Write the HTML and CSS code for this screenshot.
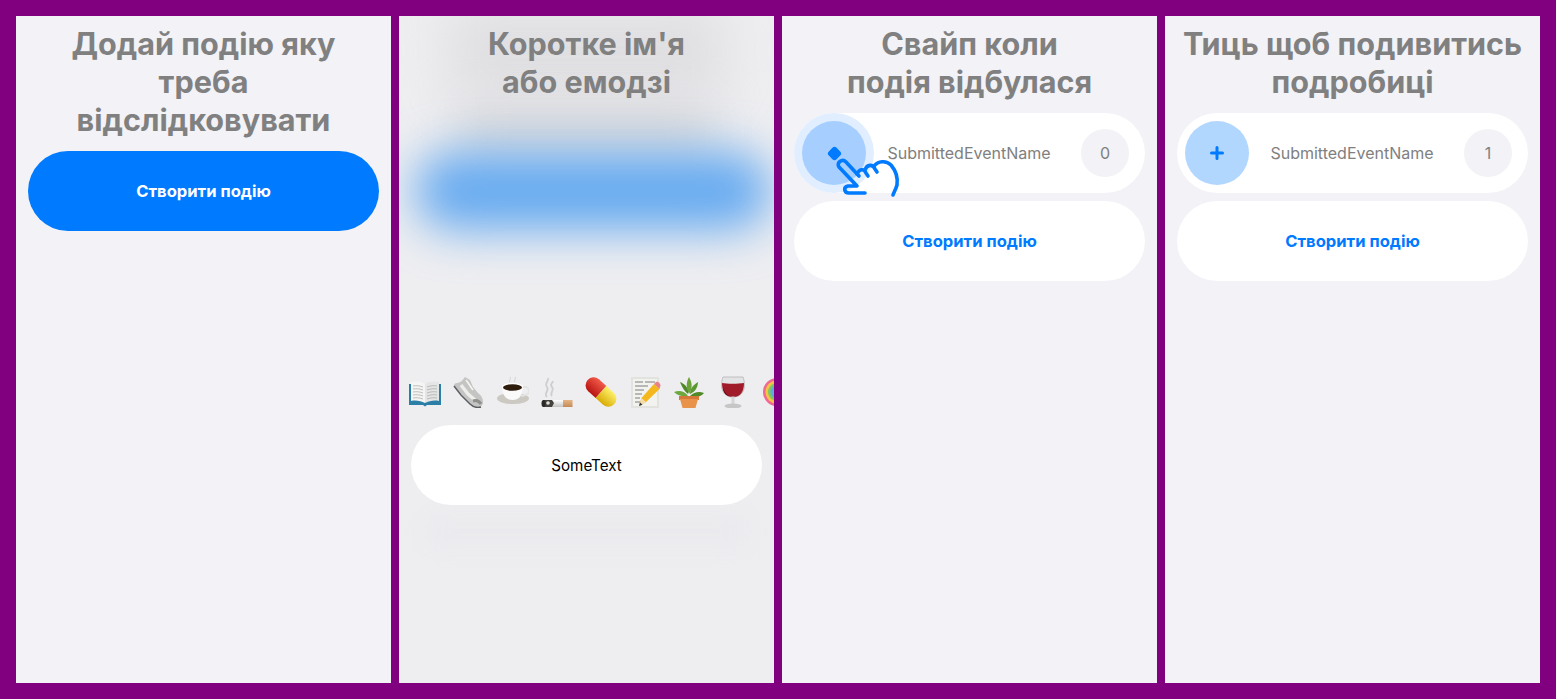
FILE: index.html
```html
<!DOCTYPE html>
<html lang="uk">
<head>
<meta charset="utf-8">
<title>Onboarding</title>
<link rel="stylesheet" href="styles.css">
</head>
<body>
<main class="screens">
  <section class="screen">
    <h1 class="title">Додай подію яку<br>треба<br>відслідковувати</h1>
    <div class="pill pill-primary">Створити подію</div>
  </section>

  <section class="screen screen-blur">
    <div class="glow glow-title"></div>
    <div class="glow glow-soft"></div>
    <div class="glow glow-blue"></div>
    <div class="glow glow-low"></div>
    <h1 class="title">Коротке ім'я<br>або емодзі</h1>
    <div class="spacer"></div>
    <div class="emoji-row">
      <svg class="emoji" viewBox="0 0 32 32">
        <path d="M0 8h32v21H18l-2 1.500-2-1.500H0z" fill="#2b7ea6"/>
        <path d="M2 6c5-1 10-1 14 2v19c-4-2-9-3-14-2z" fill="#f5f5f3"/>
        <path d="M30 6c-5-1-10-1-14 2v19c4-2 9-3 14-2z" fill="#e4e5e4"/>
        <path d="M4 10c3-.5 6-.5 10 1M4 13c3-.5 6-.5 10 1M4 16c3-.5 6-.5 10 1M4 19c3-.5 6-.5 10 1M4 22c3-.5 6-.5 10 1M28 10c-3-.5-6-.5-10 1M28 13c-3-.5-6-.5-10 1M28 16c-3-.5-6-.5-10 1M28 19c-3-.5-6-.5-10 1M28 22c-3-.5-6-.5-10 1" fill="none" stroke="#a4a6a8" stroke-width=".7"/>
      </svg>
      <svg class="emoji" viewBox="0 0 32 32">
        <path d="M1 10c0-2 1-3 3-3 3 0 6-3 8-6l5 3 3 7 5 6c3 2 5 5 5 9 0 3-2 5-5 5-3 0-6-2-8-4z" fill="#c4c4c2"/>
        <path d="M1 10l7 9 9 9c3 3 7 4 11 3" fill="none" stroke="#5a5d5f" stroke-width="1.500"/>
        <path d="M8 9l7 9 7 6" fill="none" stroke="#ededeb" stroke-width="3.500"/>
        <path d="M13 4l3 4M15 7l3 4M17 10l3 4" stroke="#f6f6f4" stroke-width="1.500"/>
        <path d="M20 25c3-1 6 0 8 3" fill="none" stroke="#8f8f8d" stroke-width="3"/>
      </svg>
      <svg class="emoji" viewBox="0 0 32 32">
        <ellipse cx="16" cy="22.500" rx="16" ry="5.500" fill="#cbc9c1"/>
        <path d="M5 9h21c0 9-3 15-10.500 15S5 18 5 9z" fill="#fafafa"/>
        <path d="M25 11h3a3.500 3.500 0 0 1 0 8l-4 1" fill="none" stroke="#e4e4e4" stroke-width="2"/>
        <ellipse cx="15.500" cy="10.500" rx="10.500" ry="3.600" fill="#fff"/>
        <ellipse cx="15.500" cy="11.500" rx="9.500" ry="3.300" fill="#2e1c0d"/>
        <path d="M13 6c-2-2 2-3 0-5M18 6c-2-2 2-3 0-5" fill="none" stroke="#d8d8d8" stroke-width="1.200"/>
      </svg>
      <svg class="emoji" viewBox="0 0 32 32">
        <defs>
          <linearGradient id="cigBody" x1="0" y1="0" x2="0" y2="1"><stop offset="0" stop-color="#ffffff"/><stop offset="1" stop-color="#c4c4c4"/></linearGradient>
          <linearGradient id="cigTip" x1="0" y1="0" x2="0" y2="1"><stop offset="0" stop-color="#e6b486"/><stop offset="1" stop-color="#c48a56"/></linearGradient>
        </defs>
        <path d="M3 24h20v7H3z" fill="url(#cigBody)"/>
        <path d="M2 24h9l2 3-2 4H2z" fill="#45433f"/>
        <ellipse cx="2.500" cy="27.500" rx="2" ry="3.500" fill="#2a2826"/>
        <circle cx="7" cy="27" r="1.800" fill="#e2dfd6"/>
        <path d="M22 24h9.500v7H22z" fill="url(#cigTip)"/>
        <path d="M6 21c-4-4 3-6 0-10s2-5 1-9M11 20c-3-3 3-6 0-9s1-4 1-6" fill="none" stroke="#cecece" stroke-width="1.800"/>
      </svg>
      <svg class="emoji" viewBox="0 0 32 32">
        <defs>
          <linearGradient id="capRed" x1="0" y1="0" x2="0" y2="1"><stop offset="0" stop-color="#f25a4a"/><stop offset="1" stop-color="#b81410"/></linearGradient>
          <linearGradient id="capYel" x1="0" y1="0" x2="0" y2="1"><stop offset="0" stop-color="#fdf06a"/><stop offset="1" stop-color="#d9ab05"/></linearGradient>
        </defs>
        <g transform="rotate(42 16 16)">
          <path d="M16 8H6a8 8 0 0 0 0 16h10z" fill="url(#capRed)"/>
          <path d="M16 8h10a8 8 0 0 1 0 16H16z" fill="url(#capYel)"/>
        </g>
      </svg>
      <svg class="emoji" viewBox="0 0 32 32">
        <path d="M2 1h28v31H2z" fill="#e2e2de"/>
        <path d="M4 3h24v27H4z" fill="#f2f2ef"/>
        <path d="M6 6h8M16 6h10M6 10h13M6 14h9M6 18h7M6 22h5M6 26h6" stroke="#6e6f73" stroke-width=".9"/>
        <path d="M10 30l2.500-8L25 8l5.500 5L17 26z" fill="#f4b71c"/>
        <path d="M25 8l2-2c2-1 4 1 4.500 3.500L30.500 13z" fill="#e98383"/>
        <path d="M10 30l2.500-8 4.500 4z" fill="#f3dcb2"/>
        <path d="M10 30l1-3.500 2.500 2.300z" fill="#333"/>
      </svg>
      <svg class="emoji" viewBox="0 0 32 32">
        <path d="M16 18c-3-6-3-12 0-17 3 5 4 11 0 17z" fill="#6ba33a"/>
        <path d="M15 18C11 15 9 11 7 6c5 2 9 6 8 12z" fill="#4f8a29"/>
        <path d="M17 18c0-5 3-9 8-12 0 5-3 10-8 12z" fill="#5c9832"/>
        <path d="M15 20c-5 1-10 0-14-4 5-2 11-1 14 4z" fill="#6ca83e"/>
        <path d="M17 20c4-4 9-5 14-3-3 4-9 5-14 3z" fill="#4f8a29"/>
        <path d="M6 20h20v4H6z" fill="#d5783a"/>
        <path d="M7 23h18l-2.500 9h-13z" fill="#e8924a"/>
      </svg>
      <svg class="emoji" viewBox="0 0 32 32">
        <path d="M6 1h20c3 8 2 20-10 20S3 9 6 1z" fill="#e3e3e5" stroke="#b4b4b6" stroke-width=".8"/>
        <path d="M5 7c5 1 16 1 22 0 0 8-3 14-11 14S5 15 5 7z" fill="#a11a2a"/>
        <path d="M6 11c1 5 4 8 7 9-4 0-7-4-7-9z" fill="#5c0a14"/>
        <path d="M14.500 20.500h3v8h-3z" fill="#d4d4d4"/>
        <ellipse cx="16" cy="30" rx="8.500" ry="2.500" fill="#c6c6c6"/>
      </svg>
      <svg class="emoji" viewBox="0 0 32 32">
        <circle cx="16" cy="16" r="14" fill="#ef6a93"/>
        <circle cx="16" cy="16" r="11.500" fill="#f4c543"/>
        <circle cx="16" cy="16" r="9" fill="#7cc668"/>
        <circle cx="16" cy="16" r="6.500" fill="#5fa9e2"/>
        <circle cx="16" cy="16" r="3.500" fill="#f2913f"/>
      </svg>
    </div>
    <div class="pill pill-input">SomeText</div>
  </section>

  <section class="screen">
    <h1 class="title">Свайп коли<br>подія відбулася</h1>
    <div class="event">
      <div class="action action-halo">
        <span class="dot"></span>
      </div>
      <span class="event-name">SubmittedEventName</span>
      <span class="count">0</span>
      <svg class="hand" viewBox="0 0 75 45" fill="none" stroke="#007aff" stroke-width="3.600" stroke-linecap="round" stroke-linejoin="round">
        <path d="M35 38H19c-5 0-6-6-1-7h9L9 12C6 8 12 3 16 7l13 14"/>
        <path d="M27 19c2-5 7-6 9-1l2 3"/>
        <path d="M35 15c2-6 8-6 10-1l2 3"/>
        <path d="M44 11c4-5 12-6 17-1 5 6 7 13 6 20-1 4-3 7-4 10"/>
      </svg>
    </div>
    <div class="pill pill-plain">Створити подію</div>
  </section>

  <section class="screen">
    <h1 class="title">Тиць щоб подивитись<br>подробиці</h1>
    <div class="event">
      <div class="action"><svg class="plus" viewBox="0 0 16 16"><path d="M8 2.500v11M2.500 8h11"/></svg></div>
      <span class="event-name">SubmittedEventName</span>
      <span class="count">1</span>
    </div>
    <div class="pill pill-plain">Створити подію</div>
  </section>
</main>
</body>
</html>
```
FILE: styles.css
```css
* { box-sizing: border-box; }
html, body { margin: 0; height: 100%; }
body {
  background: #800080;
  font-family: Inter, "Liberation Sans", sans-serif;
  overflow: hidden;
}
.screens {
  display: grid;
  grid-template-columns: repeat(4, 375px);
  gap: 8px;
  padding: 16px;
  height: 699px;
}
.screen {
  position: relative;
  background: #f2f2f7;
  padding: 9px 12px 0;
  display: flex;
  flex-direction: column;
  gap: 8px;
  overflow: hidden;
}
.title {
  position: relative;
  margin: 0 -8px 4px;
  font-size: 30.6px;
  line-height: 38px;
  font-weight: 700;
  color: #808080;
  text-align: center;
}
.pill {
  position: relative;
  flex: none;
  height: 80px;
  border-radius: 40px;
  display: flex;
  align-items: center;
  justify-content: center;
  font-size: 16.6px;
  font-weight: 700;
}
.pill-primary { background: #007aff; color: #fff; }
.pill-plain { background: #fff; color: #007aff; }
.pill-input {
  background: #fff;
  color: #000;
  font-size: 15.2px;
  font-weight: 400;
  margin-top: 9px;
}
.screen-blur { background: #eeeef1; }
.spacer { height: 255px; flex: none; }
.glow { position: absolute; }
.glow-title {
  left: 50px; top: -10px; width: 275px; height: 90px;
  background: #d9d9dc;
  filter: blur(26px);
  opacity: .7;
}
.glow-soft {
  left: 60px; top: 90px; width: 255px; height: 50px;
  background: #d6d7da;
  filter: blur(22px);
}
.glow-blue {
  left: 16px; top: 136px; width: 356px; height: 78px;
  border-radius: 39px;
  background: #66aaf0;
  filter: blur(23px);
}
.glow-low {
  left: 30px; top: 505px; width: 315px; height: 20px;
  background: #e9e9ed;
  filter: blur(12px);
}
.emoji-row {
  position: relative;
  display: flex;
  gap: 12px;
  margin-right: -12px;
  margin-left: -2px;
  flex: none;
}
.emoji { width: 32px; height: 32px; flex: none; filter: blur(.4px); }
.event {
  position: relative;
  flex: none;
  height: 80px;
  border-radius: 40px;
  background: #fff;
  display: flex;
  align-items: center;
  padding: 0 16px 0 8px;
}
.action {
  position: relative;
  width: 64px;
  height: 64px;
  border-radius: 50%;
  background: #b2d7ff;
  display: flex;
  align-items: center;
  justify-content: center;
  flex: none;
}
.action-halo { background: #a6cfff; box-shadow: 0 0 0 8px #e0eeff; }
.dot {
  width: 11px;
  height: 11px;
  border-radius: 3px;
  background: #007aff;
  transform: rotate(45deg);
}
.plus { width: 16px; height: 16px; fill: none; stroke: #007aff; stroke-width: 3; stroke-linecap: round; }
.event-name {
  flex: 1;
  margin-right: 9px;
  text-align: center;
  font-size: 16px;
  color: #808080;
}
.count {
  width: 48px;
  height: 48px;
  border-radius: 50%;
  background: #f2f2f7;
  color: #808080;
  font-size: 16px;
  display: flex;
  align-items: center;
  justify-content: center;
  flex: none;
}
.hand {
  position: absolute;
  left: 36px;
  top: 42px;
  width: 75px;
  height: 45px;
}
```
